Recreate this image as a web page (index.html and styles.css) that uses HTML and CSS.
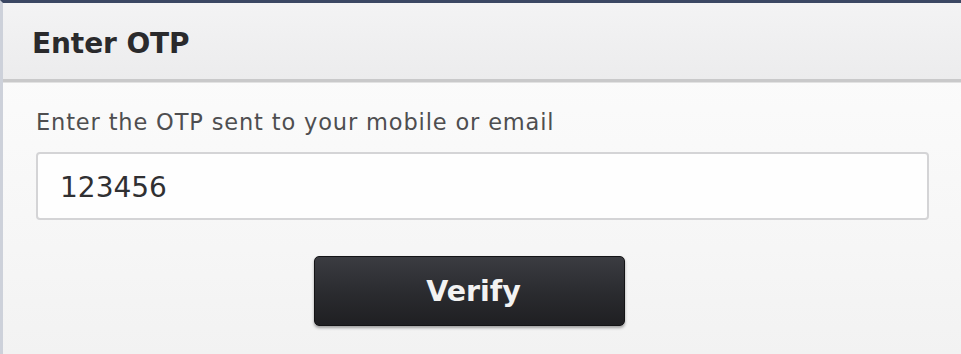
FILE: index.html
```html
<!DOCTYPE html>
<html>
<head>
<meta charset="utf-8">
<link rel="stylesheet" href="styles.css">
</head>
<body>
<div class="dialog">
  <div class="header"><h1 class="title">Enter OTP</h1></div>
  <div class="body">
    <label class="label" for="otp">Enter the OTP sent to your mobile or email</label>
    <div class="input" id="otp">123456</div>
    <div class="actions"><button class="btn">Verify</button></div>
  </div>
</div>
</body>
</html>
```
FILE: styles.css
```css
html, body { margin: 0; padding: 0; }
body {
  width: 961px; height: 354px; overflow: hidden;
  background: #f4f4f5;
  font-family: "DejaVu Sans", "Liberation Sans", sans-serif;
}
.dialog {
  height: 354px;
  box-sizing: border-box;
  border-top: 3px solid #3b4763;
  border-left: 3px solid #cdd1da;
  background: linear-gradient(#fdfdfd, #f6f6f6 70%, #f2f2f2);
}
.header {
  height: 79px;
  box-sizing: border-box;
  background: linear-gradient(#f3f3f4, #ececed);
  border-bottom: 3px solid #c9c9ca;
  box-shadow: 0 1px 0 #e2e2e2;
  display: flex; align-items: center;
  padding-left: 29px;
}
.title {
  margin: 0; padding-top: 4px;
  font-size: 28px; font-weight: 700; color: #2a2a2c;
  letter-spacing: -0.1px;
}
.body { padding: 27px 29px 0 33px; }
.label {
  display: block;
  font-size: 22.5px; color: #4e4e50;
  line-height: 26px;
  letter-spacing: 0.85px;
}
.input {
  margin-top: 17px;
  height: 68px; box-sizing: border-box;
  width: 893px;
  border: 2px solid #d4d4d6; border-radius: 4px;
  background: #fefefe;
  display: flex; align-items: center;
  padding-left: 22px; padding-top: 2px;
  font-size: 28px; color: #303032;
}
.actions { display: flex; padding-left: 278px; margin-top: 36px; }
.btn {
  width: 311px; height: 70px;
  border: 1px solid #141416; border-radius: 5px;
  background: linear-gradient(#3b3c41, #2b2c30 50%, #1f1f22);
  color: #f2f2f2;
  font-family: "DejaVu Sans", "Liberation Sans", sans-serif;
  font-size: 28.5px; font-weight: 700;
  box-shadow: 0 2px 3px rgba(0,0,0,0.35);
  padding: 0 0 0 8px;
}
```
